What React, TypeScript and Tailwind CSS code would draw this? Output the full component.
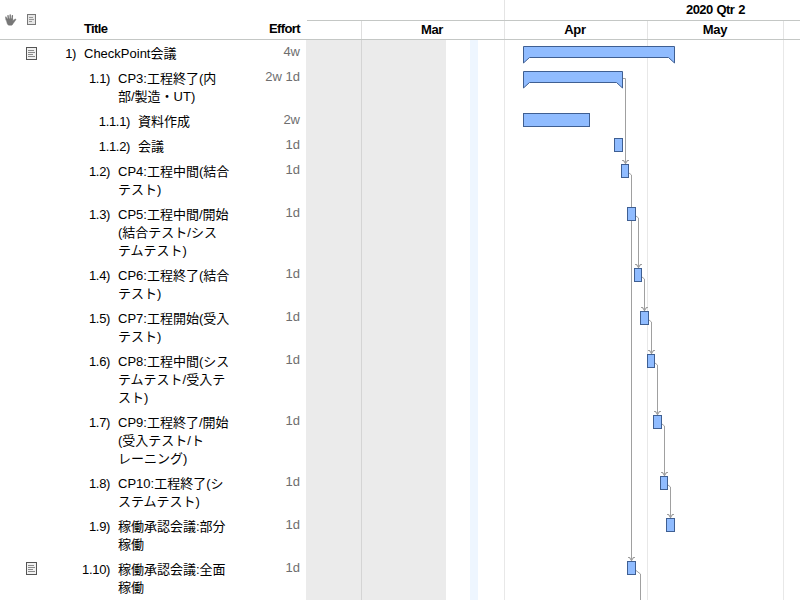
type Task = { id: string; lines: string[]; effort: string; level: number; note?: boolean };

const tasks: Task[] = [
  { id: '1)', lines: ['CheckPoint会議'], effort: '4w', level: 0, note: true },
  { id: '1.1)', lines: ['CP3:工程終了(内', '部/製造・UT)'], effort: '2w 1d', level: 1 },
  { id: '1.1.1)', lines: ['資料作成'], effort: '2w', level: 2 },
  { id: '1.1.2)', lines: ['会議'], effort: '1d', level: 2 },
  { id: '1.2)', lines: ['CP4:工程中間(結合', 'テスト)'], effort: '1d', level: 1 },
  { id: '1.3)', lines: ['CP5:工程中間/開始', '(結合テスト/シス', 'テムテスト)'], effort: '1d', level: 1 },
  { id: '1.4)', lines: ['CP6:工程終了(結合', 'テスト)'], effort: '1d', level: 1 },
  { id: '1.5)', lines: ['CP7:工程開始(受入', 'テスト)'], effort: '1d', level: 1 },
  { id: '1.6)', lines: ['CP8:工程中間(シス', 'テムテスト/受入テ', 'スト)'], effort: '1d', level: 1 },
  { id: '1.7)', lines: ['CP9:工程終了/開始', '(受入テスト/ト', 'レーニング)'], effort: '1d', level: 1 },
  { id: '1.8)', lines: ['CP10:工程終了(シ', 'ステムテスト)'], effort: '1d', level: 1 },
  { id: '1.9)', lines: ['稼働承認会議:部分', '稼働'], effort: '1d', level: 1 },
  { id: '1.10)', lines: ['稼働承認会議:全面', '稼働'], effort: '1d', level: 1, note: true },
];

const numberWidth = ['w-[34px]', 'w-[68px]', 'w-[88px]'];

// x, y, width, height of each plain task bar
const bars = [
  [523, 113, 67, 14],
  [614, 138, 9, 14],
  [621, 164, 8, 14],
  [627, 207, 9, 14],
  [634, 268, 8, 14],
  [640, 311, 9, 14],
  [647, 354, 8, 14],
  [653, 415, 9, 14],
  [660, 476, 8, 14],
  [666, 518, 9, 14],
  [627, 561, 9, 14],
];

// start x, start y, drop x, bend y, end y of each dependency
const links = [
  [623, 78.5, 625.5, 78.5, 164],
  [629, 173, 631.5, 175, 561],
  [636, 216, 638.5, 218, 268],
  [642, 277, 644.5, 279, 311],
  [649, 320, 651.5, 322, 354],
  [655, 363, 657.5, 365, 415],
  [662, 424, 664.5, 426, 476],
  [668, 485, 670.5, 487, 518],
];

function NoteIcon({ faded = false }: { faded?: boolean }) {
  return faded ? (
    <svg width="9" height="11" viewBox="0 0 9 11" className="block">
      <rect x="0.5" y="0.5" width="8" height="10" fill="#e6e6e6" stroke="#777" />
      <path d="M2 3.5h4M2 5.5h5M2 7.5h3" stroke="#989898" />
    </svg>
  ) : (
    <svg width="11" height="13" viewBox="0 0 11 13" className="block">
      <rect x="0.5" y="0.5" width="10" height="12" fill="#f1f1f1" stroke="#555" />
      <path d="M2 3.5h6M2 5.5h7M2 7.5h5M2 9.5h7" stroke="#8a8a8a" />
    </svg>
  );
}

function HandIcon() {
  return (
    <svg width="12" height="12" viewBox="0 0 12 12" fill="none" stroke="#777" strokeLinecap="round" className="block">
      <path d="M1.6 5.8.9 3.2M3.400 5.3 3 1.6M5.2 5V.9M7 5.3l.4-3.700" strokeWidth="1.4" />
      <path
        d="M1.1 4.8h6.700v2l2-1.600c.7-.5 1.5 0 1 .6L8 9.700c-.5 1-1 1.5-2 1.5H4.2c-1 0-1.700-.7-2-1.700z"
        fill="#777"
        strokeWidth="0.5"
      />
    </svg>
  );
}

function Outline() {
  return (
    <section className="w-[306px] shrink-0">
      <header className="flex h-10 border-b border-[#c4c7c5] font-bold leading-[18px]">
        <div className="flex w-[84px] pl-[5px] pt-[14px]">
          <HandIcon />
          <div className="ml-[10px]">
            <NoteIcon faded />
          </div>
        </div>
        <div className="flex-1 pt-5 tracking-[-0.6px]">Title</div>
        <div className="pr-[6px] pt-5 tracking-[-0.6px]">Effort</div>
      </header>
      <div className="pt-px">
        {tasks.map((t) => (
          <div key={t.id} className="flex pb-[3px] pt-1 leading-[18px]">
            <div className={`w-[42px] shrink-0 pl-[26px] ${t.level === 0 ? 'pt-[2px]' : 'pt-px'}`}>
              {t.note && <NoteIcon />}
            </div>
            <div className={`${numberWidth[t.level]} shrink-0 text-right tracking-[-0.35px]`}>{t.id}</div>
            <div className="flex-1 whitespace-nowrap pl-2">
              {t.lines.map((line) => (
                <div key={line} className="h-[18px]">{line}</div>
              ))}
            </div>
            <div className="-mt-[2px] pr-[6px] text-[#6e6e6e]">{t.effort}</div>
          </div>
        ))}
      </div>
    </section>
  );
}

function TimelineHeader() {
  return (
    <header className="flex h-10 flex-col border-b border-[#c4c7c5] pl-px font-bold">
      <div className="flex h-[21px] border-b border-[#c4c7c5]">
        <div className="w-[198px] border-r border-[#e4e4e4]" />
        <div className="flex-1 pl-[181px] leading-[20px] tracking-[-0.6px] [word-spacing:1px]">2020 Qtr 2</div>
      </div>
      <div className="flex h-[18px] text-center leading-[18px] tracking-[-0.3px]">
        <div className="w-[55px] border-r border-[#dedede]" />
        <div className="w-[143px] border-r border-[#e4e4e4] pr-[2px]">Mar</div>
        <div className="w-[143px] border-r border-[#e4e4e4] pr-[2px]">Apr</div>
        <div className="w-[136px] border-r border-[#e4e4e4] pr-[1px]">May</div>
      </div>
    </header>
  );
}

function Chart() {
  return (
    <svg width="494" height="560" viewBox="306 40 494 560" className="block">
      <rect x="306" y="40" width="140" height="560" fill="#ebebeb" />
      <rect x="470" y="40" width="8" height="560" fill="#eef6ff" />
      <path d="M361.500 40V600" stroke="#d4d4d4" />
      <path d="M504.500 40V600M647.500 40V600M783.500 40V600" stroke="#e8e8e8" />
      <g fill="none" stroke="#a0a0a0">
        {links.map(([x, y, dx, by, end]) => (
          <g key={`${x}-${y}`}>
            <path d={`M${x} ${y}L${dx} ${by}V${end}`} />
            <path d={`M${dx - 3.5} ${end - 3.5}h1.500l2 3l2-3h1.500`} strokeWidth="1.2" />
          </g>
        ))}
        <path d="M636 570.500L640.500 574V600" />
      </g>
      <g fill="#90bcff" stroke="#3f5f92">
        <path d="M523.500 46.500H674.500V63L668.500 57.500H529.500L523.500 63Z" />
        <path d="M523.500 71.500H622.500V88L616.500 82.500H529.500L523.500 88Z" />
        {bars.map(([x, y, w, h]) => (
          <rect key={`${x}-${y}`} x={x + 0.5} y={y + 0.5} width={w - 1} height={h - 1} />
        ))}
      </g>
    </svg>
  );
}

export default function App() {
  return (
    <main className="flex h-[600px] w-[800px] overflow-hidden bg-white font-['Liberation_Sans','Noto_Sans_CJK_JP',sans-serif] text-[13px] text-black">
      <Outline />
      <section className="w-[494px] shrink-0">
        <TimelineHeader />
        <Chart />
      </section>
    </main>
  );
}
